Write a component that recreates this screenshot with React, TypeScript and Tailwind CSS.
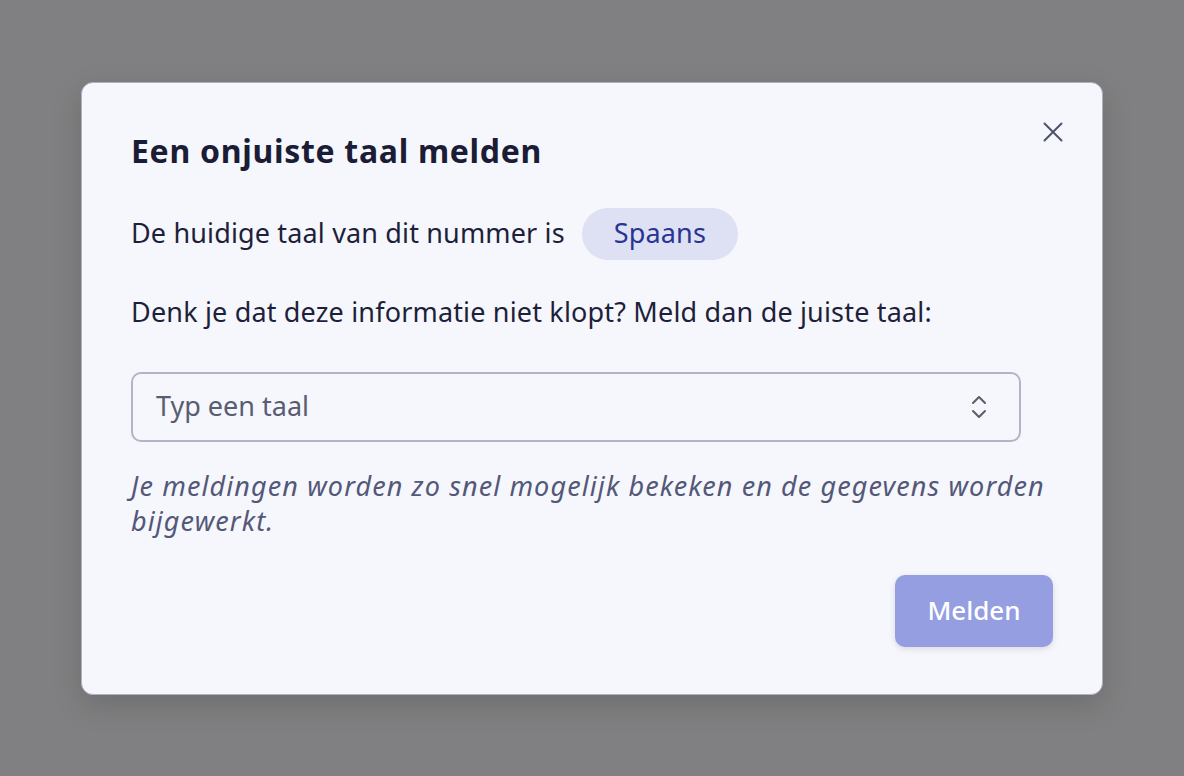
import React from "react";

export default function App() {
  return (
    <div
      className="flex h-screen w-full items-center justify-center bg-[#808082]"
      style={{ fontFamily: '"Noto Sans", "Open Sans", sans-serif' }}
    >
      <div className="relative w-[1022px] rounded-[12px] border border-[#adb1c3] bg-[#f5f7fc] px-[49px] pb-[47px] pt-[48px] shadow-[0_10px_30px_rgba(0,0,0,0.15)]">
        <button className="absolute right-[32px] top-[32px] flex h-[34px] w-[34px] items-center justify-center text-[#50526a]">
          <svg width="20" height="20" viewBox="0 0 20 20" fill="none" stroke="currentColor" strokeWidth="2" strokeLinecap="round">
            <path d="M1.5 1.5L18.5 18.5M18.5 1.5L1.5 18.5" />
          </svg>
        </button>
        <h2 className="text-[32px] font-bold leading-[40px] tracking-[0.7px] text-[#1b1c35]">Een onjuiste taal melden</h2>
        <div className="mt-[37px] flex h-[52px] items-center gap-[17px] text-[27px] tracking-[0.15px] text-[#1e1f3a]">
          <span>De huidige taal van dit nummer is</span>
          <span className="flex h-[52px] items-center rounded-full bg-[#dee1f3] px-[32px] text-[#2a3592]">Spaans</span>
        </div>
        <p className="mt-[34px] text-[27px] leading-[36px] tracking-[0.17px] text-[#1e1f3a]">
          Denk je dat deze informatie niet klopt? Meld dan de juiste taal:
        </p>
        <div className="mt-[42px] flex h-[70px] w-[890px] items-center justify-between rounded-[10px] border-2 border-[#b1b5c8] pl-[23px] pr-[30px]">
          <span className="text-[27px] text-[#5a5c72]">Typ een taal</span>
          <svg width="20" height="28" viewBox="0 0 20 28" fill="none" stroke="#5b5d6b" strokeWidth="2" strokeLinecap="round" strokeLinejoin="round">
            <path d="M4 10L10 4L16 10M4 18L10 24L16 18" />
          </svg>
        </div>
        <p className="mt-[26px] text-[27px] italic leading-[35px] tracking-[1.1px] text-[#545878]">
          Je meldingen worden zo snel mogelijk bekeken en de gegevens worden bijgewerkt.
        </p>
        <div className="mt-[37px] flex justify-end">
          <button className="h-[72px] w-[158px] rounded-[10px] bg-[#959ee0] text-[26px] font-medium text-white shadow-[0_2px_6px_rgba(0,0,0,0.12)]">
            Melden
          </button>
        </div>
      </div>
    </div>
  );
}
